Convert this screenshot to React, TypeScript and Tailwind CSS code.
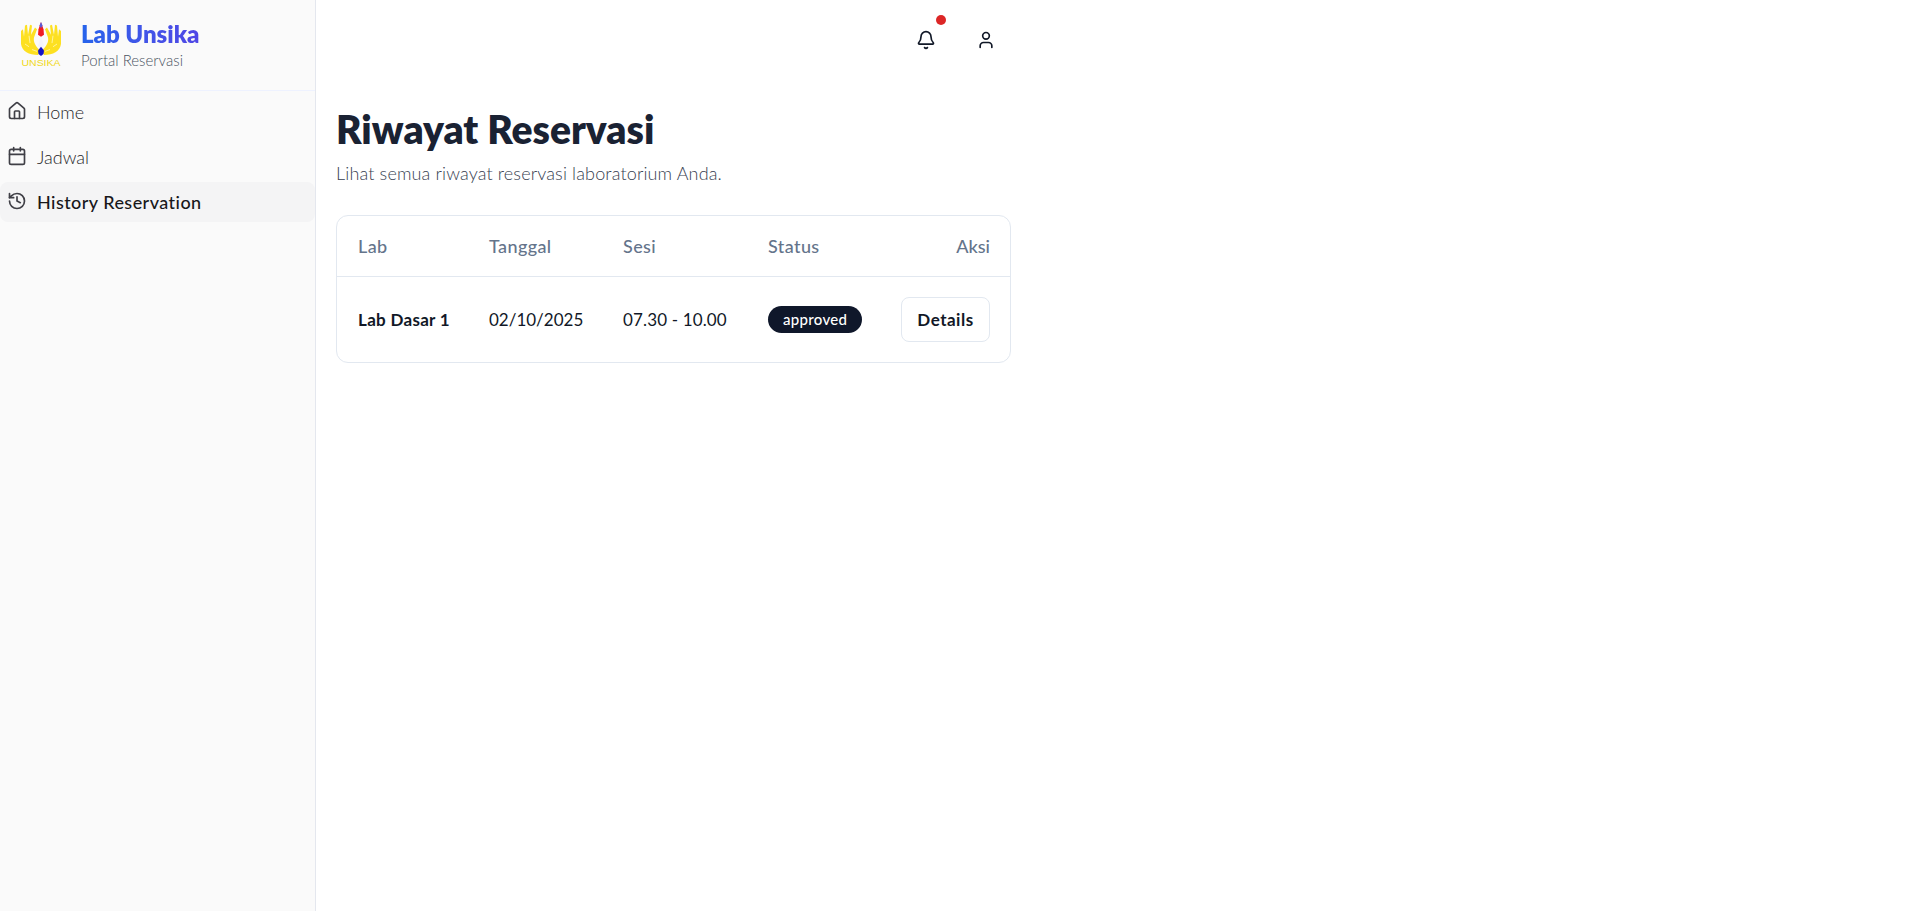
import { Bell, Calendar, History, Home, User } from "lucide-react"

function Logo() {
  return (
    <svg viewBox="0 0 42 48" className="w-[42px] h-[48px] shrink-0">
      <g transform="translate(0 0) scale(1 0.92)">
        <path d="M18.5 9 L21 1 L23.5 9 L24 15 L21 17 L18 15 Z" fill="#ef1c24" />
        <path d="M21 1 L19.5 5 L21 8 L22.5 5 Z" fill="#5a5ad8" />
        <path d="M21 17 L18 27 L21 31 L24 27 Z" fill="#f4f4fb" />
        <path d="M18 37 C 9 37 2 33 1 25 L 1 11 L 3 9 L 4 17 L 5 5 L 7 4 L 8 15 L 10 4 L 12 5 L 11 15 L 15 7 L 17 9 L 14 18 C 13 23 16 28 20 32 Z" fill="#fde021" />
        <path d="M24 37 C 33 37 40 33 41 25 L 41 11 L 39 9 L 38 17 L 37 5 L 35 4 L 34 15 L 32 4 L 30 5 L 31 15 L 27 7 L 25 9 L 28 18 C 29 23 26 28 22 32 Z" fill="#fde021" />
        <path d="M5 25 L9 28 M9 16 L10 24 M37 25 L33 28 M33 16 L32 24 M12 31 L17 33 M30 31 L25 33" stroke="#fff3a0" strokeWidth="1" />
        <path d="M21 28 L24 32 L23.5 36 L21 38 L18.5 36 L18 32 Z" fill="#1414c8" />
      </g>
      <text x="21" y="45" textAnchor="middle" fontSize="9" fill="#f0d820" fontFamily="Liberation Sans, sans-serif" textLength="39" lengthAdjust="spacingAndGlyphs">UNSIKA</text>
    </svg>
  )
}

function NavItem({ icon: Icon, label, active }: { icon: typeof Home; label: string; active?: boolean }) {
  return (
    <a
      href="#"
      className={
        active
          ? "flex items-center gap-[10px] h-10 pl-[7px] rounded-lg bg-[#f4f4f5] text-[#18181b] font-medium text-[18px] tracking-[0.45px]"
          : "flex items-center gap-[10px] h-10 pl-[7px] rounded-lg text-[#27272a] font-light text-[18px]"
      }
    >
      <Icon className="w-5 h-5 text-[#3f3f46] -mt-[3px]" strokeWidth={2} />
      <span>{label}</span>
    </a>
  )
}

export default function App() {
  return (
    <div className="flex min-h-[911px] bg-white font-['Lato',sans-serif]">
      <aside className="w-[316px] shrink-0 bg-[#fafafa] border-r border-[#e4e7ee]">
        <div className="flex items-center gap-[20px] h-[91px] pl-[20px] border-b border-[#eef2ff]">
          <Logo />
          <div className="flex flex-col -ml-[1px]">
            <span className="text-[24px] leading-[30px] font-extrabold text-transparent bg-clip-text bg-gradient-to-r from-[#2563eb] to-[#4f46e5]">
              Lab Unsika
            </span>
            <span className="text-[15px] leading-[22px] font-light text-[#4b5563]">Portal Reservasi</span>
          </div>
        </div>
        <nav className="flex flex-col gap-[5px] pt-px">
          <NavItem icon={Home} label="Home" />
          <NavItem icon={Calendar} label="Jadwal" />
          <NavItem icon={History} label="History Reservation" active />
        </nav>
      </aside>

      <main className="w-[715px] px-5">
        <header className="flex justify-end items-center gap-5 h-[80px] pr-[5px]">
          <button className="relative flex items-center justify-center w-10 h-10 text-[#111827]">
            <Bell className="w-5 h-5" />
            <span className="absolute -top-[5px] right-0 w-[10px] h-[10px] rounded-full bg-[#dc2626]" />
          </button>
          <button className="flex items-center justify-center w-10 h-10 text-[#111827]">
            <User className="w-5 h-5" />
          </button>
        </header>

        <h1 className="mt-[26px] text-[39px] leading-[46px] font-extrabold text-[#1a2233]">
          Riwayat Reservasi
        </h1>
        <p className="mt-[7px] text-[18px] leading-[28px] font-light tracking-[0.15px] text-[#374151]">
          Lihat semua riwayat reservasi laboratorium Anda.
        </p>

        <div className="mt-[28px] rounded-xl border border-[#e2e8f0] overflow-hidden">
          <table className="w-full table-fixed text-[18px]">
            <thead>
              <tr className="h-[60px] border-b border-[#e2e8f0] text-[#64748b]">
                <th className="w-[132px] pl-[21px] pt-px text-left font-medium tracking-[0.4px]">Lab</th>
                <th className="w-[134px] pl-5 pt-px text-left font-medium tracking-[0.4px]">Tanggal</th>
                <th className="w-[145px] pl-5 pt-px text-left font-medium tracking-[0.4px]">Sesi</th>
                <th className="pl-5 pt-px text-left font-medium tracking-[0.4px]">Status</th>
                <th className="pr-5 pt-px text-right font-medium">Aksi</th>
              </tr>
            </thead>
            <tbody>
              <tr className="h-[86px] text-[17px]">
                <td className="pl-[21px] pt-px font-bold tracking-[0.3px] text-[#111827]">Lab Dasar 1</td>
                <td className="pl-5 pt-px text-[#111827]">02/10/2025</td>
                <td className="pl-5 pt-px tracking-[0.15px] text-[#111827]">07.30 - 10.00</td>
                <td className="pl-5">
                  <span className="inline-flex items-center h-[27px] px-[15px] rounded-full bg-[#0f172a] text-white text-[15px] font-medium tracking-[0.3px]">
                    approved
                  </span>
                </td>
                <td className="pr-5 text-right">
                  <button className="h-[45px] w-[89px] pt-px rounded-lg border border-[#e2e8f0] bg-white text-[#111827] font-bold text-[17px] tracking-[0.5px]">
                    Details
                  </button>
                </td>
              </tr>
            </tbody>
          </table>
        </div>
      </main>
    </div>
  )
}
